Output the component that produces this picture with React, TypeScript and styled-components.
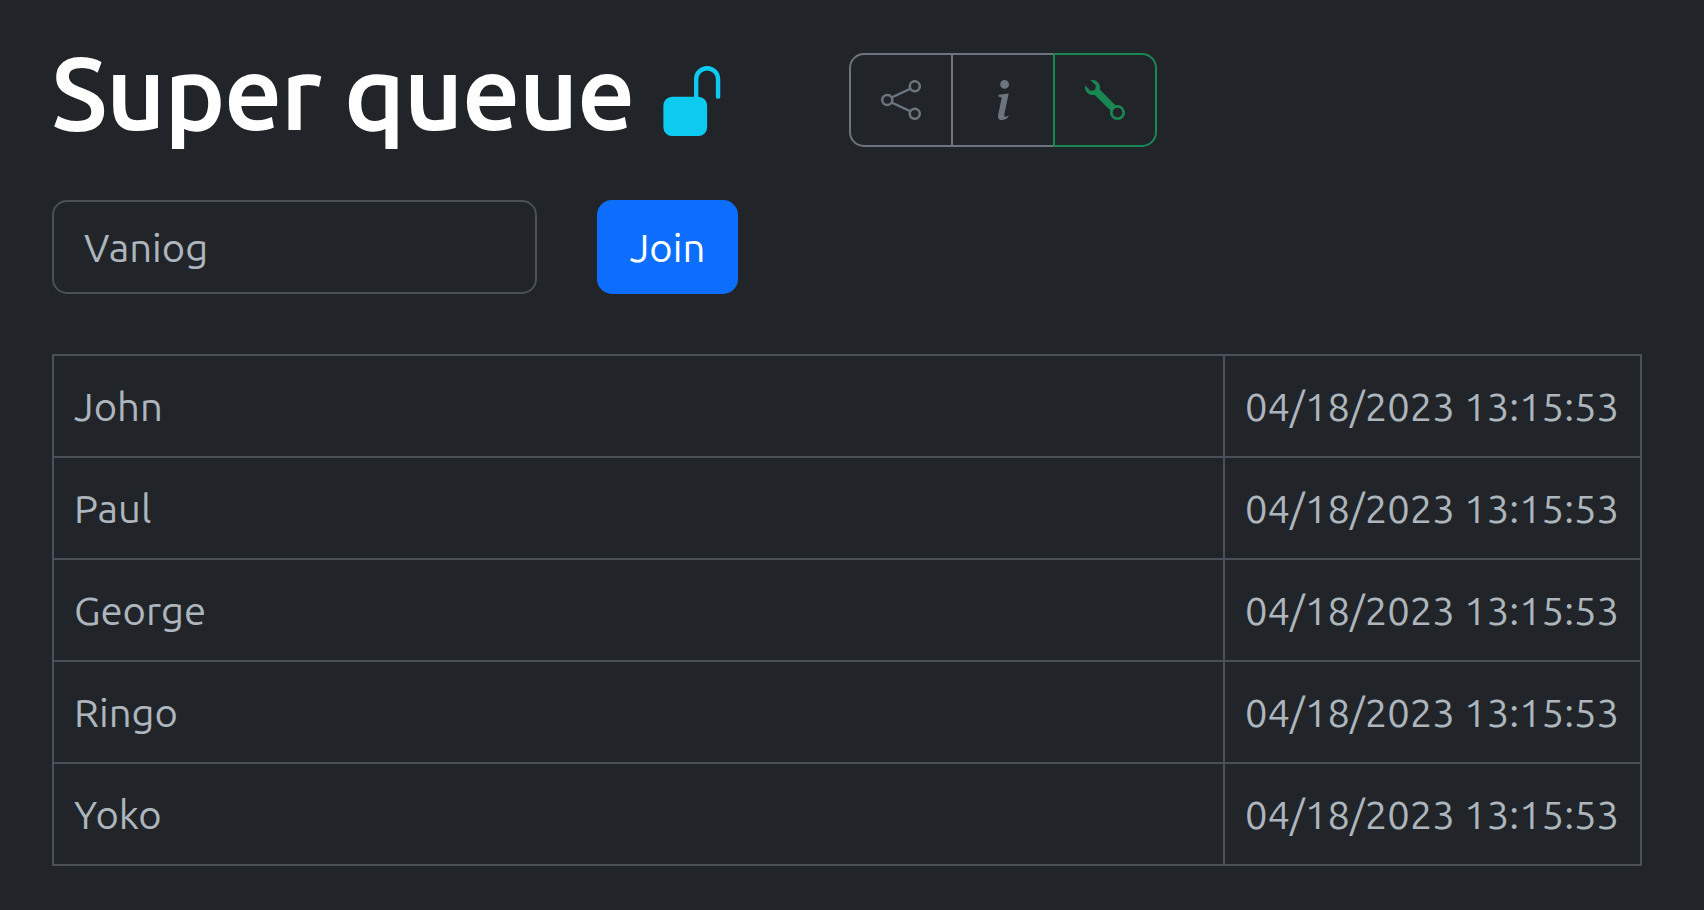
import React from 'react';
import styled, { createGlobalStyle } from 'styled-components';
import { BsShare, BsUnlockFill, BsWrench } from 'react-icons/bs';

const GlobalStyle = createGlobalStyle`
  *, *::before, *::after { box-sizing: border-box; }
  body {
    margin: 0;
    background: #212529;
    color: #adb5bd;
    font-family: Ubuntu, "Noto Sans", sans-serif;
    font-size: 40px;
    line-height: 60px;
  }
`;

const Page = styled.main`
  padding: 37px 62px 44px 52px;
`;

const Header = styled.header`
  display: flex;
  align-items: flex-end;
  gap: 120px;
  margin-bottom: 53px;
`;

const Title = styled.h1`
  display: flex;
  align-items: flex-end;
  gap: 24px;
  margin: 0;
  color: #fff;
  font-size: 101px;
  font-weight: 500;
  line-height: 110px;
  white-space: nowrap;
  -webkit-text-stroke: 2px currentColor;
`;

const LockIcon = styled(BsUnlockFill)`
  width: 70px;
  height: 70px;
  margin-bottom: 11px;
  color: #0dcaf0;
`;

const ButtonGroup = styled.div`
  display: flex;
`;

const ToolButton = styled.button<{ $color: string }>`
  display: grid;
  place-items: center;
  width: 104px;
  height: 94px;
  margin: 0 0 0 -2px;
  padding: 0;
  border: 2px solid ${({ $color }) => $color};
  background: transparent;
  color: ${({ $color }) => $color};
  &:first-child { margin-left: 0; border-radius: 15px 0 0 15px; }
  &:last-child { border-radius: 0 15px 15px 0; }
`;

const JoinForm = styled.form`
  display: flex;
  gap: 60px;
  margin-bottom: 60px;
`;

const NameInput = styled.input`
  width: 485px;
  height: 94px;
  padding: 0 30px;
  border: 2px solid #495057;
  border-radius: 15px;
  background: #212529;
  color: #adb5bd;
  font: inherit;
`;

const JoinButton = styled.button`
  min-width: 141px;
  height: 94px;
  padding: 2px 32px 0;
  border: 0;
  border-radius: 15px;
  background: #0d6efd;
  color: #fff;
  font: inherit;
`;

const QueueTable = styled.table`
  width: 100%;
  border-collapse: collapse;
`;

const Cell = styled.td`
  padding: 21px 20px 19px;
  border: 2px solid #495057;
  white-space: nowrap;
`;

const TimeCell = styled(Cell)`
  width: 417px;
`;

function InfoIcon() {
  return (
    <svg width="40" height="40" viewBox="0 0 16 16" fill="currentColor" aria-hidden="true">
      <path d="m10.277 5.433-4.031.505-.145.67.794.145c.516.123.619.309.505.824L6.101 13.68c-.34 1.578.186 2.32 1.423 2.32.959 0 2.072-.443 2.577-1.052l.155-.732c-.35.31-.866.434-1.206.434-.485 0-.66-.34-.536-.939zm.122-3.673a1.76 1.76 0 1 1-3.52 0 1.76 1.76 0 0 1 3.52 0z" />
    </svg>
  );
}

const people = ['John', 'Paul', 'George', 'Ringo', 'Yoko'];

export default function App() {
  return (
    <Page>
      <GlobalStyle />
      <Header>
        <Title>Super queue <LockIcon /></Title>
        <ButtonGroup role="group" aria-label="Queue tools">
          <ToolButton type="button" $color="#6c757d" aria-label="Share"><BsShare size={40} /></ToolButton>
          <ToolButton type="button" $color="#6c757d" aria-label="Information"><InfoIcon /></ToolButton>
          <ToolButton type="button" $color="#198754" aria-label="Settings"><BsWrench size={40} /></ToolButton>
        </ButtonGroup>
      </Header>
      <JoinForm>
        <NameInput aria-label="Name" defaultValue="Vaniog" />
        <JoinButton type="button">Join</JoinButton>
      </JoinForm>
      <QueueTable>
        <tbody>
          {people.map((name) => (
            <tr key={name}>
              <Cell>{name}</Cell>
              <TimeCell>04/18/2023 13:15:53</TimeCell>
            </tr>
          ))}
        </tbody>
      </QueueTable>
    </Page>
  );
}
